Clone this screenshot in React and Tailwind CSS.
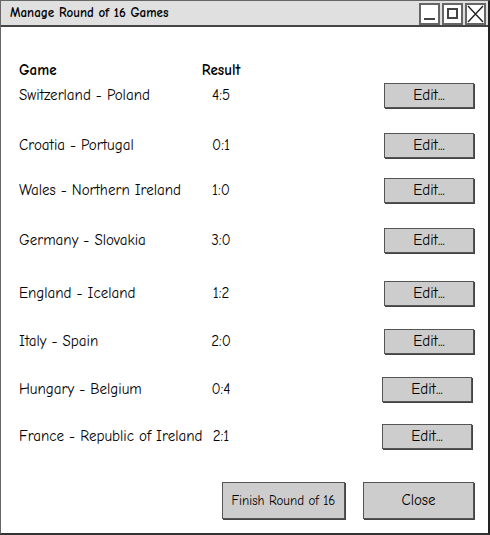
const games = [
  { name: 'Switzerland - Poland', result: '4:5', mt: 'mt-[6px]' },
  { name: 'Croatia - Portugal', result: '0:1', mt: 'mt-[25px]' },
  { name: 'Wales - Northern Ireland', result: '1:0', mt: 'mt-[20px]' },
  { name: 'Germany - Slovakia', result: '3:0', mt: 'mt-[25px]' },
  { name: 'England - Iceland', result: '1:2', mt: 'mt-[28px]' },
  { name: 'Italy - Spain', result: '2:0', mt: 'mt-[23px]' },
  { name: 'Hungary - Belgium', result: '0:4', mt: 'mt-[23px]', shift: true },
  { name: 'France - Republic of Ireland', result: '2:1', mt: 'mt-[22px]', shift: true },
]

function SketchButton({ children, className }) {
  return (
    <button
      className={`bg-[#cdcdcd] border border-[#555] shadow-[1px_1px_0_#444] text-black flex items-center justify-center ${className}`}
    >
      {children}
    </button>
  )
}

function WinBox({ children }) {
  return (
    <div className="w-[21px] h-[22px] border-2 border-[#666] bg-white flex items-center justify-center">
      {children}
    </div>
  )
}

export default function App() {
  return (
    <div
      className="w-[490px] h-[535px] bg-white border-l border-t border-[#666] border-r-2 border-r-[#222] border-b-2 border-b-[#333] flex flex-col text-black"
      style={{ fontFamily: '"Comic Sans MS", "Comic Neue", "Noto Sans", sans-serif' }}
    >
      {/* title bar */}
      <div className="h-[26px] bg-[#e0e0e0] border-b-2 border-[#444] flex items-center pl-[9px] pr-[2px] shrink-0">
        <span className="text-[13px] font-bold">Manage Round of 16 Games</span>
        <div className="ml-auto flex gap-[2px] mt-[1px]">
          <WinBox>
            <div className="w-[11px] h-[2px] bg-[#444] mt-[10px]" />
          </WinBox>
          <WinBox>
            <div className="w-[11px] h-[11px] border-2 border-[#444]" />
          </WinBox>
          <WinBox>
            <svg width="17" height="18" viewBox="0 0 17 18">
              <path d="M1 1 L16 17 M16 1 L1 17" stroke="#222" strokeWidth="1.4" fill="none" />
            </svg>
          </WinBox>
        </div>
      </div>

      <div className="flex flex-col pl-[18px] pr-[14px]">
        <div className="flex mt-[36px] text-[15px] font-bold leading-none h-[14px] items-center">
          <div className="w-[180px]">Game</div>
          <div className="w-[44px] text-center">Result</div>
        </div>

        {games.map((g) => (
          <div key={g.name} className={`flex items-center h-[25px] text-[15px] ${g.mt}`}>
            <div className="w-[180px] whitespace-nowrap">{g.name}</div>
            <div className="w-[44px] text-center">{g.result}</div>
            <SketchButton className={`ml-auto w-[90px] h-[25px] text-[15px] ${g.shift ? 'mr-[2px]' : ''}`}>
              Edit...
            </SketchButton>
          </div>
        ))}

        <div className="flex mt-[33px] justify-end gap-[18px]">
          <SketchButton className="w-[123px] h-[37px] text-[13px]">Finish Round of 16</SketchButton>
          <SketchButton className="w-[111px] h-[37px] text-[15px]">Close</SketchButton>
        </div>
      </div>
    </div>
  )
}
